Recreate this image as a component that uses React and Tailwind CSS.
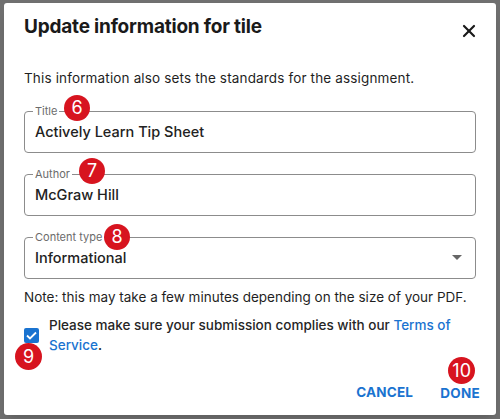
import { X } from 'lucide-react';

function Badge({ n, className }) {
  return (
    <div
      className={`absolute flex items-center justify-center rounded-full bg-[#d7141f] text-white text-[18px] leading-none ${className}`}
    >
      {n}
    </div>
  );
}

function Field({ label, value, badge, badgeClass, select }) {
  return (
    <div className="relative h-[42px] rounded border border-[#8c8c8c] flex items-center px-[10px]">
      <span className="absolute -top-[8px] left-[8px] bg-white px-[2px] text-[11px] leading-[14px] text-[#6b6b6b]">
        {label}
      </span>
      <Badge n={badge} className={badgeClass} />
      <span className="text-[14.5px] font-medium text-[#222]">{value}</span>
      {select && (
        <svg className="ml-auto mr-[3px]" width="10" height="5" viewBox="0 0 10 5">
          <path d="M0 0h10L5 5z" fill="#666" />
        </svg>
      )}
    </div>
  );
}

export default function App() {
  return (
    <div className="w-[500px] h-[419px] bg-[#707070] p-[3px_4px_4px_4px] font-['Inter',sans-serif]">
      <div className="h-full bg-white rounded-[3px] shadow-lg flex flex-col px-[20px]">
        <div className="flex items-center justify-between pt-[10px]">
          <h1 className="text-[19px] font-bold text-[#1a1a1a] tracking-[-0.2px]">Update information for tile</h1>
          <X size={20} strokeWidth={2.6} className="text-[#1a1a1a] mt-[7px] -mr-[3px]" />
        </div>
        <p className="mt-[26px] text-[13.5px] tracking-[0.15px] text-[#1f1f1f]">
          This information also sets the standards for the assignment.
        </p>
        <div className="mt-[23px] flex flex-col gap-[21px]">
          <Field label="Title" value="Actively Learn Tip Sheet" badge="6" badgeClass="w-[26px] h-[26px] -top-[17px] left-[39px]" />
          <Field label="Author" value="McGraw Hill" badge="7" badgeClass="w-[26px] h-[26px] -top-[17px] left-[54px]" />
          <Field label="Content type" value="Informational" badge="8" badgeClass="w-[26px] h-[26px] -top-[14px] left-[79px]" select />
        </div>
        <p className="mt-[8px] text-[13.5px] text-[#1f1f1f]">
          Note: this may take a few minutes depending on the size of your PDF.
        </p>
        <div className="relative mt-[8px] flex items-center">
          <div className="w-[15px] h-[15px] rounded-[2px] bg-[#1a73d0] flex items-center justify-center shrink-0">
            <svg width="11" height="9" viewBox="0 0 11 9">
              <path d="M1 4.5l3 3L10 1.5" stroke="white" strokeWidth="1.8" fill="none" />
            </svg>
          </div>
          <Badge n="9" className="w-[27px] h-[27px] top-[28px] -left-[9px]" />
          <p className="ml-[10px] text-[13.5px] leading-[20px] font-medium text-[#262626]">
            Please make sure your submission complies with our{' '}
            <span className="text-[#1a73d0]">Terms of Service</span>.
          </p>
        </div>
        <div className="mt-auto mb-[11px] flex justify-end items-center gap-[27px]">
          <button className="text-[13.5px] font-bold tracking-[0.2px] text-[#1a73d0]">CANCEL</button>
          <div className="relative mr-[-4px]">
            <button className="text-[13.5px] font-bold tracking-[0.3px] text-[#1a73d0]">DONE</button>
            <Badge n="10" className="w-[27px] h-[27px] -top-[23px] left-[8px]" />
          </div>
        </div>
      </div>
    </div>
  );
}
